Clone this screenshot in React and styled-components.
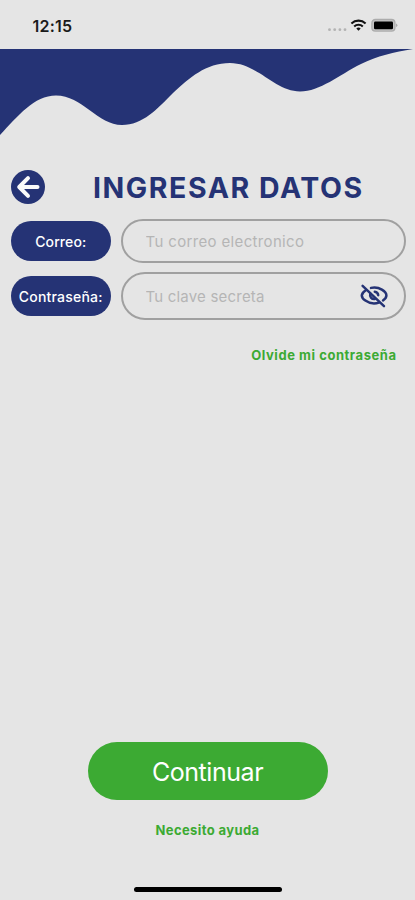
import React, {useState} from 'react'
import styled, {createGlobalStyle} from 'styled-components'

const navy = '#253375'
const green = '#3caa33'
const background = '#e5e5e5'

const GlobalStyle = createGlobalStyle`
  * {
    box-sizing: border-box;
  }
  body {
    margin: 0;
    background: ${background};
    font-family: Inter, 'Liberation Sans', sans-serif;
  }
  button {
    padding: 0;
    border: 0;
    background: none;
    font-family: inherit;
    cursor: pointer;
  }
`

const Screen = styled.div`
  display: flex;
  flex-direction: column;
  width: 415px;
  height: 900px;
  margin: 0 auto;
  overflow: hidden;
  background: ${background};
`

const StatusBar = styled.div`
  display: flex;
  flex: none;
  align-items: center;
  justify-content: space-between;
  height: 49px;
  padding: 2px 17px 0 32.5px;
`

const Time = styled.span`
  color: #1a1a1a;
  font-size: 16px;
  font-weight: 600;
  line-height: 20px;
  letter-spacing: 0.2px;
`

const StatusIcons = styled.svg`
  display: block;
  width: 71px;
  height: 16px;
`

const Wave = styled.svg`
  display: block;
  flex: none;
  width: 415px;
  height: 88px;
`

const Header = styled.header`
  display: flex;
  align-items: center;
  height: 36px;
  margin-top: 32px;
  padding-left: 11px;
`

const BackButton = styled.button`
  display: flex;
  align-items: center;
  justify-content: center;
  width: 34px;
  height: 34px;
  border-radius: 50%;
  background: ${navy};
`

const BackArrow = styled.svg`
  width: 34px;
  height: 34px;
  fill: none;
  stroke: #fafafa;
  stroke-width: 4;
  stroke-linecap: round;
  stroke-linejoin: round;
`

const Title = styled.h1`
  margin: 2px 0 0 48px;
  color: ${navy};
  font-size: 28.5px;
  font-weight: 700;
  line-height: 34px;
  letter-spacing: 1.55px;
  white-space: nowrap;
`

const Form = styled.form`
  display: flex;
  flex-direction: column;
  gap: 9px;
  margin-top: 14px;
  padding: 0 9.5px 0 11px;
`

const Row = styled.div`
  display: flex;
  align-items: center;
  gap: 10px;
`

const Label = styled.label`
  display: flex;
  flex: none;
  align-items: center;
  justify-content: center;
  width: 99.5px;
  height: 40px;
  border-radius: 20px;
  background: ${navy};
  color: #fff;
  font-size: 14px;
  font-weight: 500;
  letter-spacing: ${props => props.$spacing};
`

const Field = styled.div`
  display: flex;
  flex: 1;
  align-items: center;
  min-width: 0;
  height: ${props => props.$height};
  padding: 0 16px 0 23px;
  border: 2px solid #a0a0a0;
  border-radius: 24px;
`

const Input = styled.input`
  flex: 1;
  min-width: 0;
  padding: 0;
  border: 0;
  outline: 0;
  background: none;
  color: #333;
  font-family: inherit;
  font-size: 15px;
  letter-spacing: ${props => props.$spacing};

  &::placeholder {
    color: #b5b5b5;
    opacity: 1;
  }
`

const EyeButton = styled.button`
  display: flex;
`

const EyeIcon = styled.svg`
  width: 28px;
  height: 24px;
  fill: none;
  stroke: ${navy};
  stroke-width: 2.5;
  stroke-linecap: round;
`

const TextLink = styled.button`
  color: ${green};
  font-size: 13px;
  font-weight: 700;
  line-height: 18px;
  letter-spacing: ${props => props.$spacing};
`

const ForgotRow = styled.div`
  display: flex;
  justify-content: flex-end;
  margin-top: 26px;
  padding-right: 18.5px;
`

const Footer = styled.footer`
  display: flex;
  flex-direction: column;
  align-items: center;
  margin-top: auto;
  padding-bottom: 8px;
`

const SubmitButton = styled.button`
  width: 240px;
  height: 58px;
  margin-bottom: 21px;
  padding-top: 2px;
  border-radius: 29px;
  background: ${green};
  color: #fff;
  font-size: 25px;
  font-weight: 400;
  letter-spacing: -0.45px;
`

const HomeIndicator = styled.div`
  width: 148px;
  height: 5px;
  margin-top: 48px;
  border-radius: 3px;
  background: #000;
`

const Status = () => (
  <StatusBar>
    <Time>12:15</Time>
    <StatusIcons viewBox="0 0 71 16">
      <g fill="#b3b3b3">
        <circle cx="2.5" cy="11.7" r="1.4" />
        <circle cx="7.7" cy="11.7" r="1.4" />
        <circle cx="12.9" cy="11.7" r="1.4" />
        <circle cx="18" cy="11.7" r="1.4" />
      </g>
      <g fill="none" stroke="#111" strokeWidth="2.1">
        <path d="M24.4 5.4a10.5 10.5 0 0 1 14.2 0" />
        <path d="M27.2 8.5a6.3 6.3 0 0 1 8.6 0" />
      </g>
      <path d="M29.3 10.5a3.3 3.3 0 0 1 4.4 0l-2.2 2.3z" fill="#111" />
      <rect
        x="44.9"
        y="1.5"
        width="23"
        height="11.6"
        rx="3.4"
        fill="#c4c4c4"
        stroke="#acacac"
        strokeWidth="1.3"
      />
      <rect x="47" y="3.5" width="19" height="7.7" rx="1.2" fill="#000" />
      <path d="M69 5.5v3.6q1.4-.6 1.4-1.8t-1.4-1.8z" fill="#acacac" />
    </StatusIcons>
  </StatusBar>
)

const Eye = ({open}) =>
  open ? (
    <EyeIcon viewBox="0 0 28 24">
      <ellipse cx="14" cy="11.5" rx="12.2" ry="8" />
      <circle cx="14" cy="11.5" r="3.8" />
    </EyeIcon>
  ) : (
    <EyeIcon viewBox="0 0 28 24">
      <path d="M2.6 1.8L24 22.2" />
      <path d="M5.8 6.2C3.4 7.8 1.8 9.8 1.8 11.4C1.8 14.6 7.2 19.4 14 19.4C15.8 19.4 17.4 19.1 18.8 18.6" />
      <path d="M11 3.9C19.5 2.1 26.4 7.6 26.4 11.4C26.4 13.2 25 15 23 16.4" />
      <path d="M10.3 9.6C9.4 12.8 11.6 15.4 14.8 15" />
      <path d="M14.8 7.8C16.7 8.1 18 9.3 18.2 11.2" />
    </EyeIcon>
  )

const App = () => {
  const [visible, setVisible] = useState(false)

  return (
    <>
      <GlobalStyle />
      <Screen>
        <Status />
        <Wave viewBox="0 0 415 88">
          <path
            d="M0 0H413C394 3 377 7 361 15C339 26 320 42.5 300 42.5C275 42.5 257 14 230 14C206 14 189 29 173 44C157 60 143 76 122 76C98 76 82 46.5 56 46.5C34 46.5 18 67 0 86Z"
            fill={navy}
          />
        </Wave>
        <Header>
          <BackButton type="button" aria-label="Volver">
            <BackArrow viewBox="0 0 34 34">
              <path d="M26.5 17H8.5M17 8.2L8.2 17L17 25.8" />
            </BackArrow>
          </BackButton>
          <Title>INGRESAR DATOS</Title>
        </Header>
        <Form>
          <Row>
            <Label htmlFor="email" $spacing="0.1px">
              Correo:
            </Label>
            <Field $height="44px">
              <Input
                id="email"
                type="email"
                placeholder="Tu correo electronico"
                $spacing="0.35px"
              />
            </Field>
          </Row>
          <Row>
            <Label htmlFor="password" $spacing="0.2px">
              Contraseña:
            </Label>
            <Field $height="48px">
              <Input
                id="password"
                type={visible ? 'text' : 'password'}
                placeholder="Tu clave secreta"
                $spacing="0.2px"
              />
              <EyeButton
                type="button"
                aria-label="Mostrar clave"
                onClick={() => setVisible(!visible)}
              >
                <Eye open={visible} />
              </EyeButton>
            </Field>
          </Row>
        </Form>
        <ForgotRow>
          <TextLink type="button" $spacing="0.55px">
            Olvide mi contraseña
          </TextLink>
        </ForgotRow>
        <Footer>
          <SubmitButton type="button">Continuar</SubmitButton>
          <TextLink type="button" $spacing="0.4px">
            Necesito ayuda
          </TextLink>
          <HomeIndicator />
        </Footer>
      </Screen>
    </>
  )
}

export default App
